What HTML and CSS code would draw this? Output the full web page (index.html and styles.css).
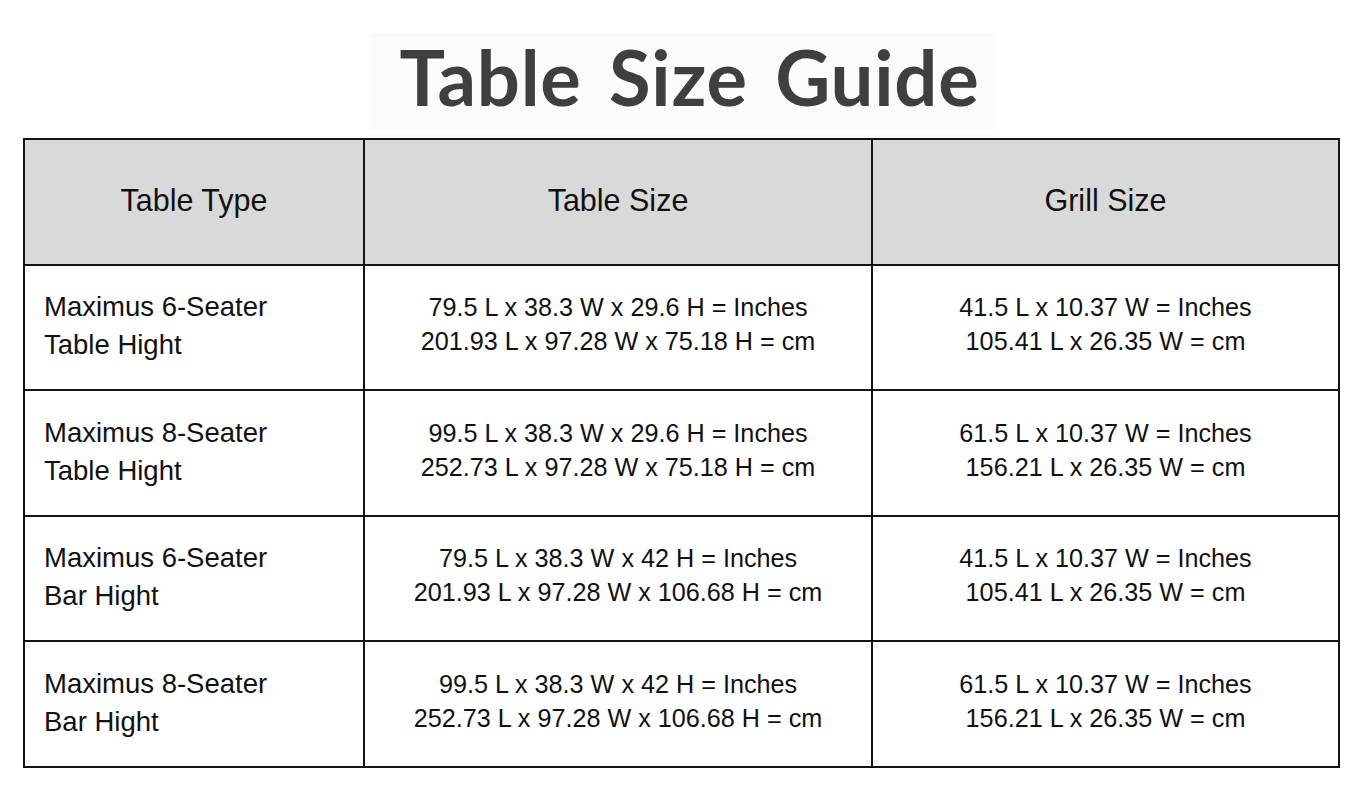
FILE: index.html
```html
<!DOCTYPE html>
<html>
<head>
<meta charset="utf-8">
<link rel="stylesheet" href="styles.css">
</head>
<body>
<div class="page">
  <div class="title-wrap"><h1 class="title">Table Size Guide</h1></div>
  <table class="guide">
    <thead>
      <tr><th class="c1">Table Type</th><th class="c2">Table Size</th><th class="c3">Grill Size</th></tr>
    </thead>
    <tbody>
      <tr>
        <td class="type">Maximus 6-Seater<br>Table Hight</td>
        <td class="size">79.5 L x 38.3 W x 29.6 H = Inches<br>201.93 L x 97.28 W x 75.18 H = cm</td>
        <td class="size">41.5 L x 10.37 W = Inches<br>105.41 L x 26.35 W = cm</td>
      </tr>
      <tr>
        <td class="type">Maximus 8-Seater<br>Table Hight</td>
        <td class="size">99.5 L x 38.3 W x 29.6 H = Inches<br>252.73 L x 97.28 W x 75.18 H = cm</td>
        <td class="size">61.5 L x 10.37 W = Inches<br>156.21 L x 26.35 W = cm</td>
      </tr>
      <tr>
        <td class="type">Maximus 6-Seater<br>Bar Hight</td>
        <td class="size">79.5 L x 38.3 W x 42 H = Inches<br>201.93 L x 97.28 W x 106.68 H = cm</td>
        <td class="size">41.5 L x 10.37 W = Inches<br>105.41 L x 26.35 W = cm</td>
      </tr>
      <tr>
        <td class="type">Maximus 8-Seater<br>Bar Hight</td>
        <td class="size">99.5 L x 38.3 W x 42 H = Inches<br>252.73 L x 97.28 W x 106.68 H = cm</td>
        <td class="size">61.5 L x 10.37 W = Inches<br>156.21 L x 26.35 W = cm</td>
      </tr>
    </tbody>
  </table>
</div>
</body>
</html>
```
FILE: styles.css
```css
html, body {
  margin: 0;
  padding: 0;
  background: #ffffff;
}
.page {
  padding: 33px 0 0 23px;
  width: 1317px;
  font-family: "Liberation Sans", Arial, sans-serif;
  color: #111;
}
.title-wrap {
  display: flex;
  justify-content: center;
  margin-bottom: 8px;
}
.title {
  box-sizing: border-box;
  margin: 0;
  width: 625px;
  height: 97px;
  padding-left: 16px;
  background: #fbfbfb;
  font-family: Lato, "Open Sans", sans-serif;
  font-weight: 700;
  font-size: 76px;
  line-height: 88px;
  letter-spacing: 0.8px;
  word-spacing: 8px;
  text-align: center;
  color: #3f3f3f;
}
.guide {
  border-collapse: collapse;
  width: 1317px;
  table-layout: fixed;
}
.guide th, .guide td {
  border: 2.5px solid #141414;
  height: 121.5px;
  padding: 0;
}
.guide th {
  background: #d9d9d9;
  font-weight: 400;
  font-size: 30.5px;
  text-align: center;
  padding-bottom: 2px;
}
.c1 { width: 338px; }
.c2 { width: 506px; }
.guide td.type {
  font-size: 27.5px;
  line-height: 38px;
  text-align: left;
  height: 121.5px;
  padding: 0 0 2px 19px;
}
.guide td.size {
  font-size: 25.2px;
  line-height: 34px;
  text-align: center;
  height: 117.5px;
  padding: 0 0 6px 0;
}
```
